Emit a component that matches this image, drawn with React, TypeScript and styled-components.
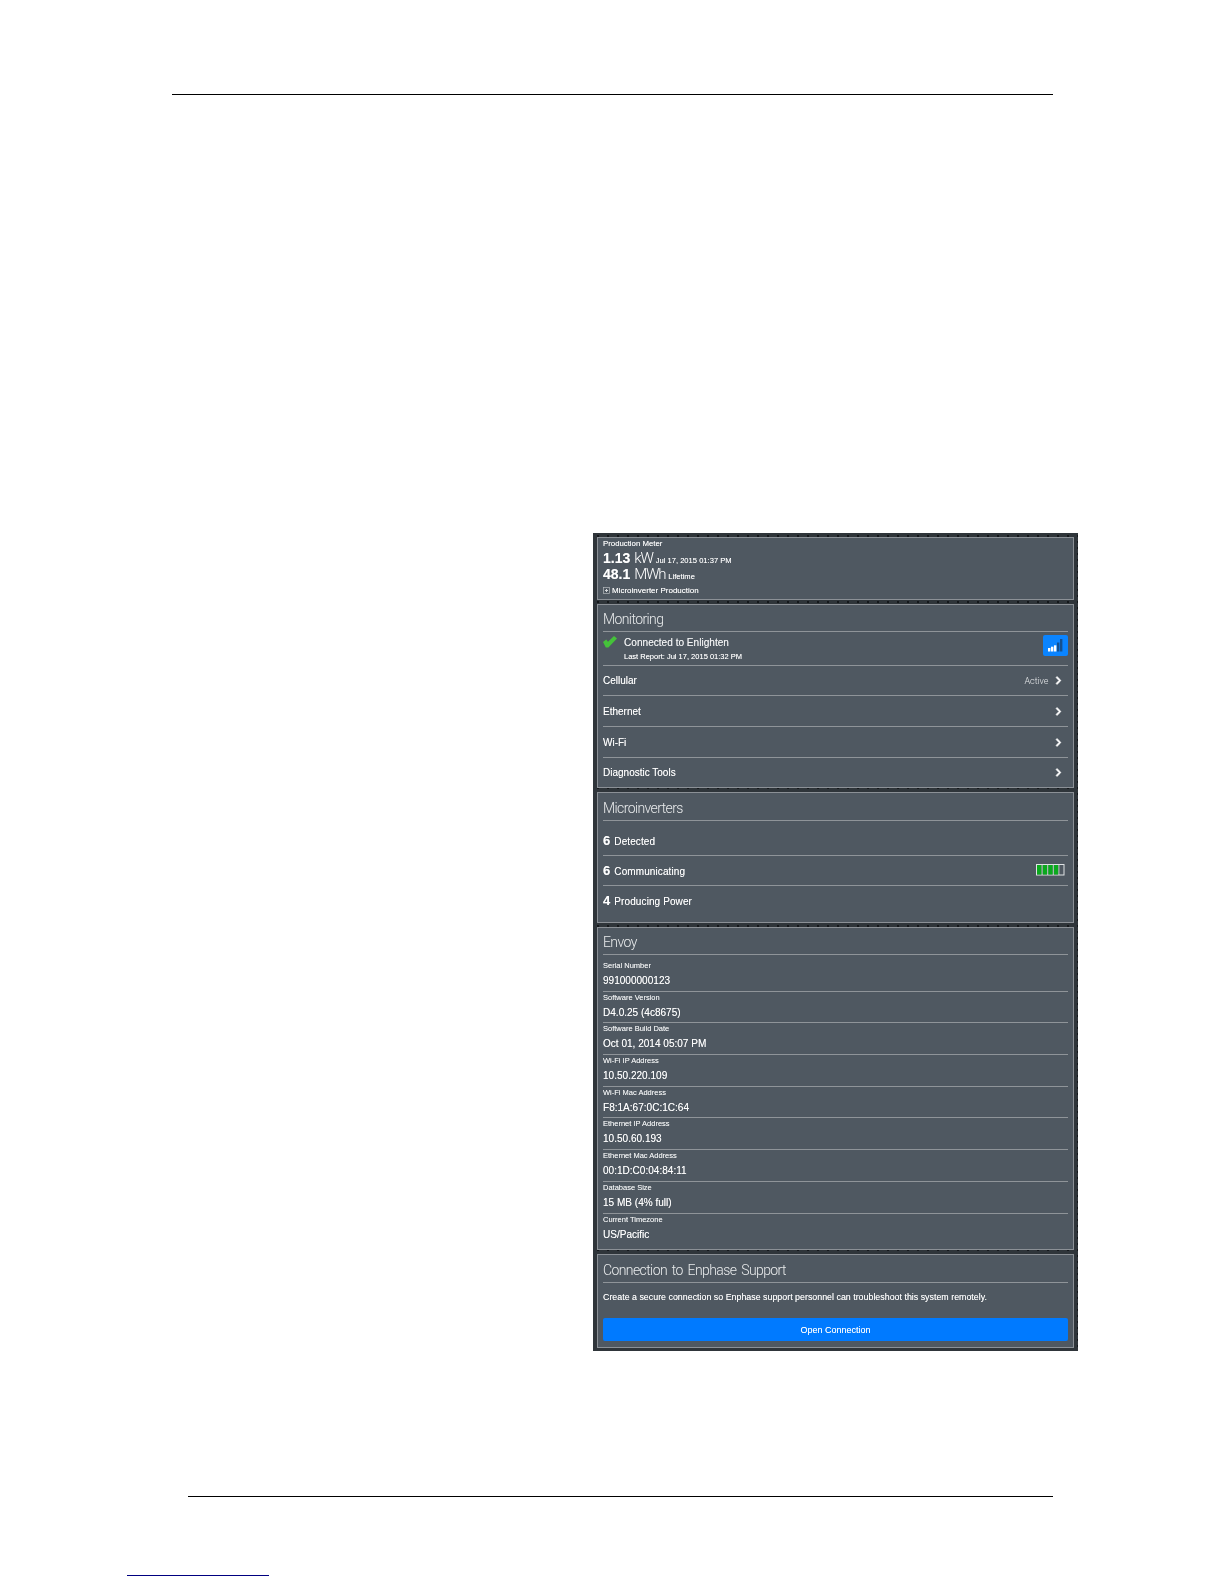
import React from "react";
import styled, { createGlobalStyle } from "styled-components";
import { FaChevronRight } from "react-icons/fa";

const GlobalStyle = createGlobalStyle`
  html, body {
    margin: 0;
    padding: 0;
    background: #fff;
    font-family: "Liberation Sans", Arial, sans-serif;
  }
`;

const Page = styled.div`
  width: 1224px;
  height: 1584px;
  overflow: hidden;
  display: flex;
  flex-direction: column;
`;

const Rule = styled.div<{ $left: number; $width: number; $top: number }>`
  height: 1px;
  background: #000;
  margin-left: ${(p) => p.$left}px;
  margin-top: ${(p) => p.$top}px;
  width: ${(p) => p.$width}px;
`;

const LinkRule = styled.div`
  height: 1px;
  background: #000080;
  width: 142px;
  margin-left: 127px;
  margin-top: 78px;
`;

const Frame = styled.div`
  box-sizing: border-box;
  width: 485px;
  height: 818px;
  margin: 438px 0 145px 593px;
  padding: 4px 4px 2px;
  display: flex;
  flex-direction: column;
  gap: 4px;
  background-color: #2f353a;
  background-image: radial-gradient(circle, #14171a 0.7px, transparent 1px);
  background-size: 10px 6px;
  filter: blur(0.35px);
`;

const Panel = styled.section<{ $h: number }>`
  box-sizing: border-box;
  height: ${(p) => p.$h}px;
  flex: none;
  padding: 0 5px;
  background: #4f5861;
  border: 1px solid #8b9096;
  color: #fff;
  text-shadow: 0 0 0.6px rgba(255, 255, 255, 0.55);
`;

const Title = styled.h2<{ $h?: number }>`
  box-sizing: border-box;
  height: ${(p) => p.$h ?? 27}px;
  margin: 0;
  padding-top: 2px;
  display: flex;
  align-items: center;
  border-bottom: 1px solid #8f9499;
  font-family: Roboto, sans-serif;
  font-weight: 300;
  font-size: 14px;
  letter-spacing: -0.6px;
  word-spacing: 2px;
  color: #e9ebec;
  text-shadow: none;
`;

const Row = styled.div<{ $h: number; $last?: boolean }>`
  box-sizing: border-box;
  height: ${(p) => p.$h}px;
  display: flex;
  align-items: center;
  justify-content: space-between;
  padding-right: 5.5px;
  font-size: 10px;
  border-bottom: ${(p) => (p.$last ? "none" : "1px solid #8f9499")};
`;

const RowEnd = styled.span`
  display: flex;
  align-items: center;
  gap: 5px;
  color: #fff;
`;

const Faint = styled.span`
  font-family: Roboto, sans-serif;
  font-weight: 300;
  font-size: 9px;
  color: #e4e6e8;
  text-shadow: none;
`;

const MeterLabel = styled.div`
  font-size: 7.8px;
  line-height: 12px;
`;

const MeterLine = styled.div`
  display: flex;
  align-items: baseline;
  height: 16px;
  line-height: 16px;
  white-space: nowrap;
`;

const MeterValue = styled.strong`
  font-size: 14px;
  font-weight: 700;
`;

const MeterUnit = styled.span`
  font-family: Roboto, sans-serif;
  font-weight: 300;
  font-size: 15px;
  margin: 0 3px 0 4px;
  letter-spacing: -1.2px;
  text-shadow: none;
`;

const MeterNote = styled.span`
  font-size: 7.6px;
`;

const MeterLink = styled.div`
  display: flex;
  align-items: center;
  gap: 2px;
  height: 17px;
  font-size: 8px;
`;

const Status = styled(Row)`
  padding: 3px 0 0;
  align-items: flex-start;
`;

const StatusLeft = styled.div`
  display: flex;
  align-items: flex-start;
`;

const CheckWrap = styled.span`
  width: 21px;
  padding-top: 1px;
  flex: none;
`;

const StatusMain = styled.div`
  font-size: 10.1px;
  line-height: 15px;
  color: #f2f3f4;
`;

const StatusSub = styled.div`
  font-size: 7.5px;
  line-height: 14px;
`;

const CountRow = styled(Row)<{ $shift?: number }>`
  padding-right: 3px;
  padding-top: ${(p) => p.$shift ?? 0}px;
`;

const CountText = styled.span`
  display: flex;
  align-items: baseline;
  gap: 4px;
  letter-spacing: 0.1px;
`;

const CountNum = styled.strong`
  font-size: 13px;
`;

const InfoRow = styled.div<{ $last?: boolean; $first?: boolean }>`
  box-sizing: border-box;
  height: ${(p) => (p.$first ? 36.7 : 31.7)}px;
  padding-top: ${(p) => (p.$first ? 5 : 0)}px;
  border-bottom: ${(p) => (p.$last ? "none" : "1px solid #8f9499")};
`;

const InfoLabel = styled.div`
  font-size: 7.5px;
  line-height: 12px;
  color: #eef0f1;
`;

const InfoValue = styled.div`
  font-size: 10.05px;
  line-height: 17px;
`;

const SupportText = styled.p`
  margin: 0;
  height: 35px;
  line-height: 28px;
  font-size: 8.87px;
  white-space: nowrap;
`;

const ConnectButton = styled.button`
  display: block;
  width: 100%;
  height: 23px;
  padding: 0;
  border: 0;
  border-radius: 2px;
  background: #007aff;
  color: #fff;
  font-family: "Liberation Sans", Arial, sans-serif;
  font-size: 9px;
  text-shadow: 0 0 0.6px rgba(255, 255, 255, 0.55);
`;

const BatterySvg = styled.svg`
  margin-bottom: 2px;
`;

const Chevron = () => (
  <FaChevronRight size={9} color="#fff" stroke="#fff" strokeWidth={40} />
);

const CheckIcon = () => (
  <svg width="14" height="12" viewBox="0 0 14 12">
    <path d="M0 6 3.2 3.6 5 5.8 11 0 14 2.4 5.4 11.5 2.8 11.5Z" fill="#45c23a" />
  </svg>
);

const SignalIcon = () => (
  <svg width="25" height="21" viewBox="0 0 25 21">
    <rect width="25" height="21" rx="2" fill="#0a84ff" />
    <rect x="5" y="13" width="2.4" height="3.5" fill="#fff" />
    <rect x="8" y="11.7" width="2.4" height="4.8" fill="#fff" />
    <rect x="11" y="10.3" width="2.4" height="6.2" fill="#fff" />
    <rect x="14" y="7.5" width="2.4" height="9" fill="#14508f" />
    <rect x="17" y="4" width="2.4" height="12.5" fill="#14508f" />
  </svg>
);

const BatteryIcon = () => (
  <BatterySvg width="29" height="12" viewBox="0 0 29 12">
    <rect x="0.5" y="0.5" width="27.5" height="10.5" fill="none" stroke="#dfe2e4" />
    <rect x="1" y="1" width="4.6" height="9.5" fill="#0aa91d" />
    <rect x="6.6" y="1" width="4.6" height="9.5" fill="#0aa91d" />
    <rect x="12.2" y="1" width="4.6" height="9.5" fill="#0aa91d" />
    <rect x="17.8" y="1" width="4.6" height="9.5" fill="#0aa91d" />
    <path d="M6.1 1V11M11.7 1V11M17.3 1V11M22.9 1V11" stroke="#dfe2e4" strokeWidth="0.8" />
  </BatterySvg>
);

const ExpandIcon = () => (
  <svg width="7" height="7" viewBox="0 0 7 7">
    <rect x="0.5" y="0.5" width="6" height="6" fill="none" stroke="#b5babd" strokeWidth="0.7" />
    <rect x="2" y="3" width="3" height="1" fill="#d5d8da" />
    <rect x="3" y="2" width="1" height="3" fill="#d5d8da" />
  </svg>
);

const envoyInfo = [
  ["Serial Number", "991000000123"],
  ["Software Version", "D4.0.25 (4c8675)"],
  ["Software Build Date", "Oct 01, 2014 05:07 PM"],
  ["Wi-Fi IP Address", "10.50.220.109"],
  ["Wi-Fi Mac Address", "F8:1A:67:0C:1C:64"],
  ["Ethernet IP Address", "10.50.60.193"],
  ["Ethernet Mac Address", "00:1D:C0:04:84:11"],
  ["Database Size", "15 MB (4% full)"],
  ["Current Timezone", "US/Pacific"]
];

export default function App() {
  return (
    <Page>
      <GlobalStyle />
      <Rule $left={172} $width={881} $top={94} />
      <Frame>
        <Panel $h={63}>
          <MeterLabel>Production Meter</MeterLabel>
          <MeterLine>
            <MeterValue>1.13</MeterValue>
            <MeterUnit>kW</MeterUnit>
            <MeterNote>Jul 17, 2015 01:37 PM</MeterNote>
          </MeterLine>
          <MeterLine>
            <MeterValue>48.1</MeterValue>
            <MeterUnit>MWh</MeterUnit>
            <MeterNote>Lifetime</MeterNote>
          </MeterLine>
          <MeterLink>
            <ExpandIcon />
            Microinverter Production
          </MeterLink>
        </Panel>

        <Panel $h={184}>
          <Title>Monitoring</Title>
          <Status $h={34}>
            <StatusLeft>
              <CheckWrap>
                <CheckIcon />
              </CheckWrap>
              <div>
                <StatusMain>Connected to Enlighten</StatusMain>
                <StatusSub>Last Report: Jul 17, 2015 01:32 PM</StatusSub>
              </div>
            </StatusLeft>
            <SignalIcon />
          </Status>
          <Row $h={30}>
            Cellular
            <RowEnd>
              <Faint>Active</Faint>
              <Chevron />
            </RowEnd>
          </Row>
          <Row $h={31}>
            Ethernet
            <Chevron />
          </Row>
          <Row $h={31}>
            Wi-Fi
            <Chevron />
          </Row>
          <Row $h={29} $last>
            Diagnostic Tools
            <Chevron />
          </Row>
        </Panel>

        <Panel $h={131}>
          <Title $h={28}>Microinverters</Title>
          <CountRow $h={35} $shift={5}>
            <CountText>
              <CountNum>6</CountNum> Detected
            </CountText>
          </CountRow>
          <CountRow $h={30}>
            <CountText>
              <CountNum>6</CountNum> Communicating
            </CountText>
            <BatteryIcon />
          </CountRow>
          <CountRow $h={28} $last>
            <CountText>
              <CountNum>4</CountNum> Producing Power
            </CountText>
          </CountRow>
        </Panel>

        <Panel $h={323}>
          <Title>Envoy</Title>
          {envoyInfo.map(([label, value], i) => (
            <InfoRow
              key={label}
              $first={i === 0}
              $last={i === envoyInfo.length - 1}
            >
              <InfoLabel>{label}</InfoLabel>
              <InfoValue>{value}</InfoValue>
            </InfoRow>
          ))}
        </Panel>

        <Panel $h={94}>
          <Title $h={28}>Connection to Enphase Support</Title>
          <SupportText>
            Create a secure connection so Enphase support personnel can
            troubleshoot this system remotely.
          </SupportText>
          <ConnectButton>Open Connection</ConnectButton>
        </Panel>
      </Frame>
      <Rule $left={188} $width={865} $top={0} />
      <LinkRule />
    </Page>
  );
}
